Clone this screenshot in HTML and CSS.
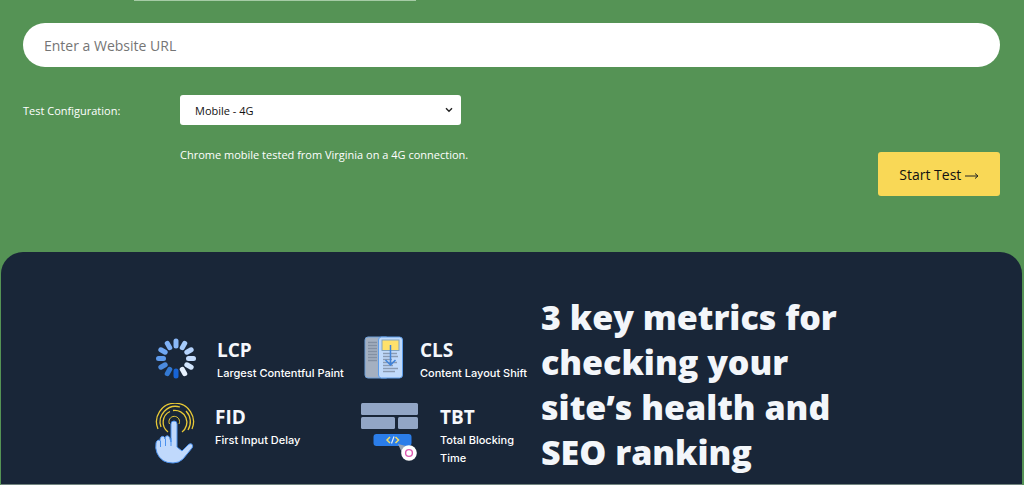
FILE: index.html
```html
<!DOCTYPE html>
<html lang="en">
<head>
    <meta charset="UTF-8">
    <meta name="viewport" content="width=device-width, initial-scale=1.0">
    <title>Website Performance Test</title>
    <link rel="stylesheet" href="styles.css">
</head>
<body>
    <div class="tab-underline"></div>

    <form class="test-form">
        <input class="url-input" type="text" placeholder="Enter a Website URL" aria-label="Website URL">
        <div class="test-row">
            <div class="config">
                <label class="config-label" for="config">Test Configuration:</label>
                <div class="select-wrap">
                    <select class="config-select" id="config">
                        <option>Mobile - 4G</option>
                    </select>
                    <svg class="chevron" viewBox="0 0 8 6" aria-hidden="true"><path d="M1 1.2 4 4.2 7 1.2" fill="none" stroke="#222" stroke-width="1.4"/></svg>
                </div>
                <p class="config-note">Chrome mobile tested from Virginia on a 4G connection.</p>
            </div>
            <button class="start-button" type="submit">Start Test <svg class="arrow" viewBox="0 0 14 8" aria-hidden="true"><path d="M0 4H12.5M10 1.5 13 4 10 6.500" fill="none" stroke="#222" stroke-width="1"/></svg></button>
        </div>
    </form>

    <section class="metrics-panel">
        <div class="metrics">
            <div class="metric">
                <svg class="icon-lcp" viewBox="0 0 42 44" aria-hidden="true">
                    <g stroke-width="5" stroke-linecap="round">
                        <path d="M21 5v5" stroke="#8ab8f8"/>
                        <path d="M21 5v5" stroke="#a5cafa" transform="rotate(30 21 22.5)"/>
                        <path d="M21 5v5" stroke="#b5d3fc" transform="rotate(60 21 22.5)"/>
                        <path d="M21 5v5" stroke="#c4dcfd" transform="rotate(90 21 22.5)"/>
                        <path d="M21 5v5" stroke="#d2e5fd" transform="rotate(120 21 22.5)"/>
                        <path d="M21 5v5" stroke="#e7f1fe" transform="rotate(150 21 22.5)"/>
                        <path d="M21 5v5" stroke="#1763d5" transform="rotate(180 21 22.5)"/>
                        <path d="M21 5v5" stroke="#3479d2" transform="rotate(210 21 22.5)"/>
                        <path d="M21 5v5" stroke="#4b8be0" transform="rotate(240 21 22.5)"/>
                        <path d="M21 5v5" stroke="#5e9aeb" transform="rotate(270 21 22.5)"/>
                        <path d="M21 5v5" stroke="#71a8f3" transform="rotate(300 21 22.5)"/>
                        <path d="M21 5v5" stroke="#7fb1f6" transform="rotate(330 21 22.5)"/>
                    </g>
                </svg>
                <div>
                    <h3 class="metric-name">LCP</h3>
                    <p class="metric-text">Largest Contentful Paint</p>
                </div>
            </div>

            <div class="metric metric-right">
                <svg class="icon-cls" viewBox="0 0 42 44" aria-hidden="true">
                    <rect x="4" y="1" width="24" height="41" rx="3" fill="#a4b0c1" stroke="#6f9fd8"/>
                    <path d="M7 6.500h9M7 9.500h9M7 12.500h9M7 15.500h9M7 18.500h9M7 21.500h9M7 24.500h9" stroke="#8390a3" stroke-width="1.500"/>
                    <rect x="17.500" y="1" width="24" height="41" rx="3" fill="#c0dafb" stroke="#5e9de9"/>
                    <rect x="21" y="4" width="17" height="10.500" fill="#ffe16b" stroke="#83a3bd"/>
                    <path d="M22 17.500h14M22 20.500h15M22 23.500h9M22 26.500h14M22 29.500h10M22 32.500h15M22 35.500h12" stroke="#8a9bb3" stroke-width="1.600"/>
                    <path d="M29.500 9v19M24.500 24l5 5 5-5" fill="none" stroke="#3e82d9" stroke-width="1.500"/>
                </svg>
                <div>
                    <h3 class="metric-name">CLS</h3>
                    <p class="metric-text">Content Layout Shift</p>
                </div>
            </div>

            <div class="metric">
                <svg class="icon-fid" viewBox="0 0 40 62" aria-hidden="true">
                    <g fill="none" stroke="#e8c936" stroke-width="1.300">
                        <path d="M3 26A18.500 18.500 0 1 1 37 26"/>
                        <path d="M6 24A15.500 15.500 0 0 1 25 4M31 8A15.500 15.500 0 0 1 33 27"/>
                        <path d="M13 29A12 12 0 0 1 15 8.500M18 7.500A12 12 0 0 1 27 29"/>
                        <path d="M14.500 21A5.300 5.300 0 1 1 24 21" stroke-width="1"/>
                    </g>
                    <path d="M16 39V21a3 3 0 0 1 6 0v23l5 4 6-6c3-3 6 0 4 3L28 56q-4 4-10 4-12 0-16-10-2-5-1-10c1-4 4-3 4-2v-2c1-4 5-3 5 0v-1c1-4 5-2 5 1Z" fill="#c0d9fc" stroke="#4b91ed" stroke-width="1" stroke-linejoin="round"/>
                    <path d="M5.500 38v6M10.500 36v7M16 35v8" fill="none" stroke="#4b91ed"/>
                </svg>
                <div>
                    <h3 class="metric-name">FID</h3>
                    <p class="metric-text">First Input Delay</p>
                </div>
            </div>

            <div class="metric metric-right">
                <svg class="icon-tbt" viewBox="0 0 62 60" aria-hidden="true">
                    <g fill="#92a6c6">
                        <rect x="0" y="0" width="57" height="12" rx="1.500"/>
                        <rect x="0" y="14" width="34" height="12" rx="1.500"/>
                        <rect x="37" y="14" width="20" height="12" rx="1.500"/>
                    </g>
                    <rect x="12.500" y="31" width="38" height="12" rx="3" fill="#2b7de9"/>
                    <path d="M29 34l-3 3 3 3M34.500 34l3 3-3 3" fill="none" stroke="#f2dd66" stroke-width="1.500"/>
                    <path d="M33 33.500 30.500 40.500" stroke="#e2ecfa" stroke-width="1.200"/>
                    <path d="M37 41l12 3-7 8Z" fill="#98a3b4"/>
                    <circle cx="48" cy="50" r="7.800" fill="#fff"/>
                    <circle cx="48" cy="50" r="3.400" fill="#fff" stroke="#dc58b0" stroke-width="1.400"/>
                </svg>
                <div>
                    <h3 class="metric-name">TBT</h3>
                    <p class="metric-text">Total Blocking Time</p>
                </div>
            </div>
        </div>

        <h2 class="metrics-title">3 key metrics for checking your site’s health and SEO ranking</h2>
    </section>
</body>
</html>
```
FILE: styles.css
```css
* {
    box-sizing: border-box;
}

body {
    margin: 0;
    background: #559355;
    font-family: 'Open Sans', sans-serif;
    color: white;
}

h2,
h3,
p {
    margin: 0;
}

.tab-underline {
    width: 282px;
    height: 1px;
    margin-left: 134px;
    background: #a6cba6;
}

.test-form {
    padding: 22px 24px 56px 23px;
}

.url-input {
    display: block;
    width: 100%;
    height: 44px;
    padding: 0 21px;
    border: 0;
    border-radius: 22px;
    background: white;
    font-family: inherit;
    font-size: 14px;
    color: #222;
}

.url-input::placeholder {
    color: #757575;
}

.test-row {
    display: flex;
    justify-content: space-between;
    align-items: flex-end;
    margin-top: 28px;
}

.config {
    display: grid;
    grid-template-columns: 157px 281px;
    row-gap: 20px;
    align-items: center;
    align-self: flex-start;
    font-size: 11px;
}

.select-wrap {
    position: relative;
}

.config-select {
    display: block;
    width: 100%;
    height: 30px;
    padding: 0 15px;
    border: 0;
    border-radius: 3px;
    background: white;
    appearance: none;
    font-family: inherit;
    font-size: 11px;
    color: #111;
}

.chevron {
    position: absolute;
    top: 12px;
    right: 8px;
    width: 8px;
    height: 6px;
    pointer-events: none;
}

.config-note {
    grid-column: 2;
    line-height: 20px;
    white-space: nowrap;
}

.start-button {
    height: 44px;
    margin-top: 57px;
    padding: 0 21px;
    border: 0;
    border-radius: 3px;
    background: #f9d856;
    font-family: inherit;
    font-size: 14px;
    color: #111;
    cursor: pointer;
}

.arrow {
    width: 14px;
    height: 8px;
}

.metrics-panel {
    display: flex;
    align-items: flex-start;
    min-height: calc(100vh - 252px);
    margin: 0 2px 0 1px;
    padding: 43px 24px 9px 154px;
    border-bottom: 1px solid #71847f;
    border-radius: 22px 22px 0 0;
    background: #192638;
}

.metrics {
    display: grid;
    grid-template-columns: 206px 172px;
    row-gap: 21px;
    margin-top: 41px;
    margin-right: 8px;
}

.metric {
    display: flex;
    align-items: flex-start;
    gap: 20px;
}

.metric-right {
    gap: 17px;
}

.metric svg {
    flex: none;
}

.icon-lcp,
.icon-cls {
    width: 42px;
    height: 44px;
}

.icon-fid {
    width: 40px;
    height: 62px;
}

.icon-tbt {
    width: 62px;
    height: 60px;
}

.metric-name {
    font-size: 19px;
    line-height: 28px;
    color: #f5f8fc;
}

.metric-text {
    font-family: Inter, sans-serif;
    font-size: 11px;
    font-weight: 500;
    line-height: 18px;
}

.metrics-title {
    max-width: 300px;
    font-size: 34px;
    font-weight: 800;
    line-height: 45px;
    color: #f3f6fa;
}
```
